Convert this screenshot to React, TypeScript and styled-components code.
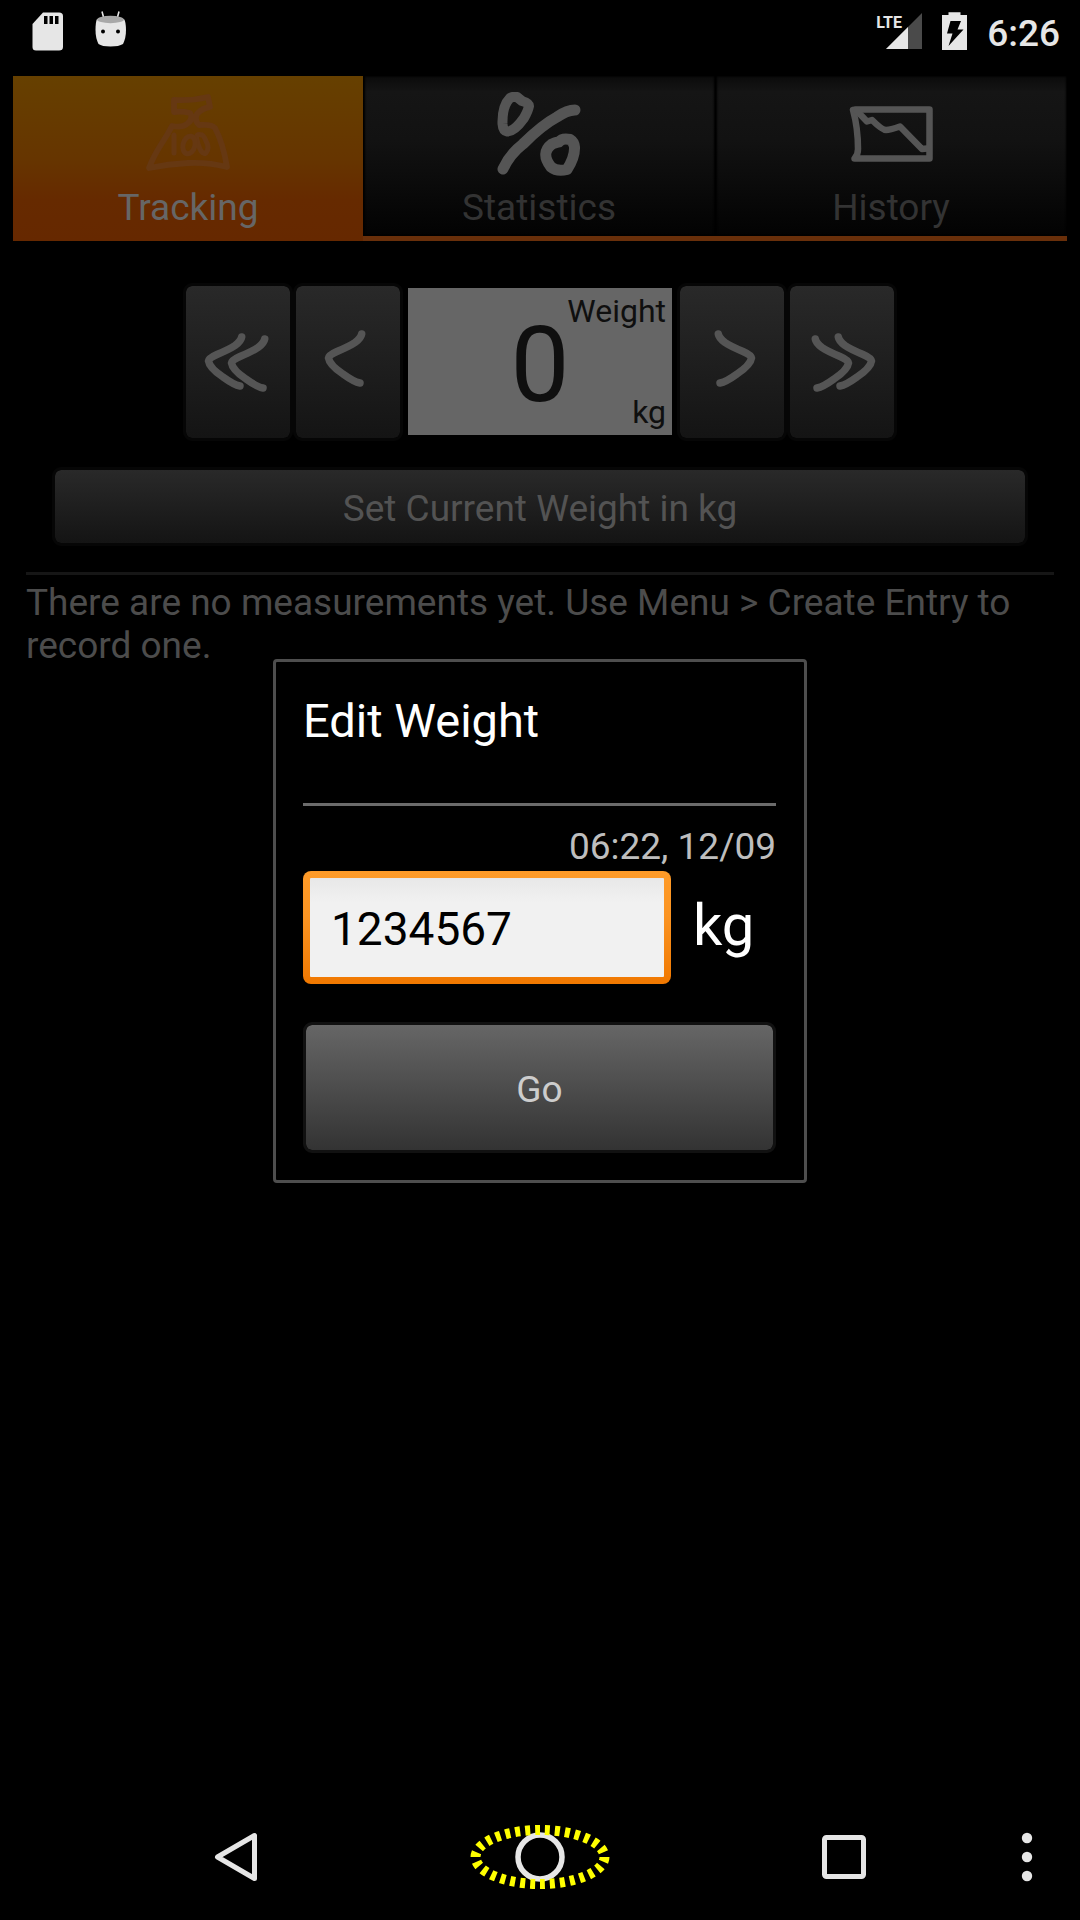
import React, { useState } from "react";
import styled, { createGlobalStyle } from "styled-components";

const GlobalStyle = createGlobalStyle`
  *, *::before, *::after { box-sizing: border-box; }
  body { margin: 0; background: #000; }
  button, input { font-family: inherit; }
  h1, p { margin: 0; font-weight: 400; }
  svg { display: block; }
`;

const Screen = styled.div`
  position: relative;
  display: flex;
  flex-direction: column;
  min-height: 100vh;
  background: #000;
  color: #4c4c4c;
  font-family: Roboto, "Noto Sans", sans-serif;
  font-size: 37px;
  line-height: 43px;
`;

const StatusBar = styled.header`
  display: flex;
  align-items: flex-start;
  justify-content: space-between;
  height: 76px;
  padding: 10px 20px 0 32px;
  color: #e6e6e6;
`;

const StatusGroup = styled.div<{ $gap: number }>`
  display: flex;
  gap: ${(p) => p.$gap}px;
`;

const Clock = styled.time`
  padding-top: 2px;
  font-weight: 500;
`;

const Tabs = styled.nav`
  display: grid;
  grid-template-columns: 350fr 352fr 352fr;
  padding: 0 13px;
`;

const Tab = styled.button<{ $selected: boolean }>`
  display: flex;
  flex-direction: column;
  align-items: center;
  gap: 10px;
  height: 165px;
  padding: 16px 0 0;
  border: 0;
  border-bottom: ${(p) => (p.$selected ? "0" : "5px solid #692f0a")};
  background: ${(p) =>
    p.$selected
      ? "linear-gradient(#664000, #663500 50%, #662a00 75%, #662800)"
      : "linear-gradient(#0b0b0b, #151515 10%, #121212 40%, #020202)"};
  box-shadow: ${(p) => (p.$selected ? "none" : "inset 2px 0 2px #000, inset -1px 0 2px #000")};
  color: ${(p) => (p.$selected ? "#666" : "#333")};
  font-size: 37px;
  line-height: 43px;
`;

const Main = styled.main`
  display: flex;
  flex-direction: column;
  padding: 42px 26px 0;
`;

const Stepper = styled.div`
  display: flex;
  justify-content: center;
`;

const HoloButton = styled.button`
  display: flex;
  align-items: center;
  justify-content: center;
  padding: 3px 0 0;
  border: 3px solid #060606;
  border-radius: 9px;
  background: linear-gradient(#292929, #141414) padding-box;
  color: #535353;
  font-size: 37px;
  line-height: 43px;
`;

const StepButton = styled(HoloButton)`
  width: 110px;
  height: 158px;
  padding: 0;
`;

const SetButton = styled(HoloButton)`
  height: 79px;
  margin: 26px;
`;

const ValueBox = styled.div`
  display: grid;
  width: 264px;
  margin: 5px 5px 6px;
  padding: 4px 6px;
  background: #666;
  color: #0f0f0f;
  font-size: 32px;
  line-height: 38px;
`;

const ValueCaption = styled.span<{ $align: "start" | "end" }>`
  grid-area: 1 / 1;
  align-self: ${(p) => p.$align};
  justify-self: end;
`;

const Value = styled.output`
  grid-area: 1 / 1;
  place-self: center;
  padding-top: 8px;
  font-size: 105px;
  line-height: 105px;
`;

const Rule = styled.hr<{ $color: string }>`
  height: 3px;
  margin: 0;
  border: 0;
  background: ${(p) => p.$color};
`;

const EmptyText = styled.p`
  padding-top: 6px;
`;

const Overlay = styled.div`
  position: absolute;
  inset: 48px 0 126px;
  display: flex;
  align-items: center;
  justify-content: center;
`;

const Dialog = styled.section`
  width: 534px;
  max-width: 100%;
  padding: 31px 28px 27px 27px;
  border: 3px solid #4e4e4e;
  border-radius: 4px;
  background: #000;
`;

const DialogTitle = styled.h1`
  margin-bottom: 54px;
  color: #fff;
  font-size: 47px;
  line-height: 56px;
`;

const Stamp = styled.p`
  padding: 19px 0 3px;
  color: #bebebe;
  text-align: right;
`;

const Field = styled.div`
  display: flex;
  align-items: baseline;
  gap: 22px;
  margin-bottom: 38px;
`;

const WeightInput = styled.input`
  flex: 1;
  min-width: 0;
  height: 113px;
  padding: 2px 21px 0;
  border: 7px solid transparent;
  border-radius: 8px;
  outline: 0;
  background:
    linear-gradient(#e8e8e8, #f1f1f1 25%) padding-box,
    linear-gradient(#ff9b28, #fb9422 40%, #f07800) border-box;
  color: #000;
  font-size: 46px;
`;

const Unit = styled.label`
  width: 83px;
  color: #fff;
  font-size: 58px;
  line-height: 68px;
`;

const GoButton = styled(HoloButton)`
  width: 100%;
  height: 131px;
  border-color: #111;
  background: linear-gradient(#666, #333) padding-box;
  color: #cdcdcd;
`;

const NavBar = styled.footer`
  display: grid;
  grid-template-columns: 84px 1fr 1fr 1fr 84px;
  height: 126px;
  margin-top: auto;
`;

const NavButton = styled.button`
  display: flex;
  align-items: center;
  justify-content: center;
  padding: 0;
  border: 0;
  background: none;
  color: #e6e6e6;

  &:first-child {
    grid-column: 2;
  }

  &:last-child {
    padding-right: 22px;
  }
`;

const SdCardIcon = () => (
  <svg width="31" height="42" viewBox="0 0 31 42" aria-hidden="true">
    <path d="M11 2.500H27Q31 2.500 31 6V37Q31 40.500 27 40.500H4Q.500 40.500 .500 37V14Z" fill="#e6e6e6" />
    <path d="M12 6h3.500v8H12zM17.500 6H21v8h-3.500zM23 6h3.500v8H23z" fill="#000" />
  </svg>
);

const RobotIcon = () => (
  <svg width="32" height="42" viewBox="0 0 32 42" aria-hidden="true">
    <path d="M7 1.500L9 9M24 1.500L22 9" stroke="#e6e6e6" strokeWidth="1.600" />
    <path d="M2 9H29Q31 12 31 20T28 34Q24 36.500 15.500 36.500T3.500 34Q.500 28 .500 20T2 9Z" fill="#e6e6e6" />
    <ellipse cx="15.500" cy="9.500" rx="13.500" ry="3.700" fill="#a8a8a8" />
    <circle cx="8" cy="21.500" r="2" fill="#000" />
    <circle cx="23" cy="21.500" r="2" fill="#000" />
  </svg>
);

const SignalIcon = () => (
  <svg width="46" height="42" viewBox="0 0 46 42" role="img" aria-label="LTE signal">
    <path d="M10 39L46 39V3Z" fill="#4a4a4a" />
    <path d="M10 39H32V17Z" fill="#e6e6e6" />
    <text x="26" y="18" textAnchor="end" fontSize="16" fontWeight="700" fill="#e6e6e6">
      LTE
    </text>
  </svg>
);

const BatteryIcon = () => (
  <svg width="25" height="42" viewBox="0 0 25 42" aria-hidden="true">
    <path d="M6.500 2.300H18.500V5H25V40H0V5H6.500Z" fill="#e6e6e6" />
    <path d="M8.500 11H19L15.500 19.500H21.500L6.500 36L10.500 23.500H5Z" fill="#000" />
  </svg>
);

const ScaleIcon = () => (
  <svg width="84" height="84" viewBox="0 0 84 84" fill="none" stroke="#663812" strokeWidth="5.800" strokeLinecap="round" strokeLinejoin="round" aria-hidden="true">
    <path d="M28 8Q46 9 62 5L64 15Q56 16 51 22Q48 28 53 33Q66 32 69 36Q77 51 81 75Q62 70 42 71Q22 72 3 76Q7 65 16 51Q22 42 26 34Q36 36 41 32Q48 27 44 21Q36 19 28 20Z" />
    <path d="M28 43V61M56 43Q49 41 51 48Q55 64 60 61Q64 56 60 49Q58 44 56 43Z" strokeWidth="5" />
    <ellipse cx="43" cy="53" rx="6" ry="9" strokeWidth="5" transform="rotate(14 43 53)" />
  </svg>
);

const PercentIcon = () => (
  <svg width="84" height="84" viewBox="0 0 84 84" fill="none" stroke="#555" strokeWidth="11" strokeLinecap="round" strokeLinejoin="round" aria-hidden="true">
    <path d="M6 77Q13 62 26 52Q45 33 60 25Q70 18 78 18" />
    <path d="M13 6Q17 4 20 5L25 9Q32 11 32 14Q31 19 27 26Q17 40 10 39.500Q6 39 5.500 32Q5 14 13 6Z" strokeWidth="10" />
    <path d="M55 52Q60 50 62 50Q65 46 73 47.500Q77 50 77.500 55Q78 65 70 77.500Q60 80 54 75Q43 61 55 52Z" />
  </svg>
);

const ChartIcon = () => (
  <svg width="84" height="84" viewBox="0 0 84 84" fill="none" stroke="#555" strokeWidth="6.500" strokeLinejoin="round" strokeLinecap="round" aria-hidden="true">
    <path d="M4 18Q5 18 7 17.500H80.500V66.500H5.500Q9 63 9 57Q9 36 4 18Z" />
    <path d="M8 19L18 29.500L23 28Q33 38 37 38Q41 38 51 34.500L73 57L78 56.500" />
  </svg>
);

const CHEVRON = "M55.700 14Q55 18 49 22.500Q44 26 31 31.500Q23 35 22.500 38Q23.500 45 37 54Q48 62 54 63";

const StepIcon = ({ double, flip }: { double?: boolean; flip?: boolean }) => (
  <svg width="84" height="84" viewBox="0 0 84 84" fill="none" stroke="#555" strokeWidth="7.500" strokeLinecap="round" aria-hidden="true">
    <g transform={flip ? "translate(84 0) scale(-1 1)" : undefined}>
      {double ? (
        <>
          <path d={CHEVRON} transform="translate(-10 3)" />
          <path d={CHEVRON} transform="translate(13 5)" />
        </>
      ) : (
        <path d={CHEVRON} />
      )}
    </g>
  </svg>
);

const BackIcon = () => (
  <svg width="44" height="52" viewBox="0 0 44 52" fill="none" stroke="currentColor" strokeWidth="5" strokeLinejoin="round" aria-hidden="true">
    <path d="M3.500 26L40.500 4.500V47.500Z" />
  </svg>
);

const HomeIcon = () => (
  <svg width="144" height="68" viewBox="0 0 144 68" fill="none" aria-hidden="true">
    <circle cx="72" cy="34" r="22" stroke="currentColor" strokeWidth="5.500" />
    <ellipse cx="72" cy="34" rx="64.500" ry="27" stroke="#ff0" strokeWidth="10" strokeDasharray="5 5" pathLength="300" />
  </svg>
);

const RecentIcon = () => (
  <svg width="44" height="44" viewBox="0 0 44 44" fill="none" aria-hidden="true">
    <rect x="2.500" y="2.500" width="39" height="39" rx="2" stroke="currentColor" strokeWidth="5" />
  </svg>
);

const MoreIcon = () => (
  <svg width="12" height="50" viewBox="0 0 12 50" fill="currentColor" aria-hidden="true">
    <circle cx="6" cy="6" r="5.200" />
    <circle cx="6" cy="25" r="5.200" />
    <circle cx="6" cy="44" r="5.200" />
  </svg>
);

const TABS = [
  { label: "Tracking", Icon: ScaleIcon },
  { label: "Statistics", Icon: PercentIcon },
  { label: "History", Icon: ChartIcon },
];

export default function App() {
  const [tab, setTab] = useState("Tracking");
  const [weight, setWeight] = useState("1234567");

  return (
    <Screen>
      <GlobalStyle />
      <StatusBar>
        <StatusGroup $gap={32}>
          <SdCardIcon />
          <RobotIcon />
        </StatusGroup>
        <StatusGroup $gap={20}>
          <SignalIcon />
          <BatteryIcon />
          <Clock>6:26</Clock>
        </StatusGroup>
      </StatusBar>

      <Tabs>
        {TABS.map(({ label, Icon }) => (
          <Tab key={label} type="button" $selected={tab === label} onClick={() => setTab(label)}>
            <Icon />
            {label}
          </Tab>
        ))}
      </Tabs>

      <Main>
        <Stepper>
          <StepButton type="button" aria-label="Decrease a lot">
            <StepIcon double />
          </StepButton>
          <StepButton type="button" aria-label="Decrease">
            <StepIcon />
          </StepButton>
          <ValueBox>
            <ValueCaption $align="start">Weight</ValueCaption>
            <Value>0</Value>
            <ValueCaption $align="end">kg</ValueCaption>
          </ValueBox>
          <StepButton type="button" aria-label="Increase">
            <StepIcon flip />
          </StepButton>
          <StepButton type="button" aria-label="Increase a lot">
            <StepIcon double flip />
          </StepButton>
        </Stepper>
        <SetButton type="button">Set Current Weight in kg</SetButton>
        <Rule $color="#161616" />
        <EmptyText>There are no measurements yet. Use Menu &gt; Create Entry to record one.</EmptyText>
      </Main>

      <NavBar>
        <NavButton type="button" aria-label="Back">
          <BackIcon />
        </NavButton>
        <NavButton type="button" aria-label="Home">
          <HomeIcon />
        </NavButton>
        <NavButton type="button" aria-label="Recent apps">
          <RecentIcon />
        </NavButton>
        <NavButton type="button" aria-label="Menu">
          <MoreIcon />
        </NavButton>
      </NavBar>

      <Overlay>
        <Dialog role="dialog" aria-labelledby="dialog-title">
          <DialogTitle id="dialog-title">Edit Weight</DialogTitle>
          <Rule $color="#6b6b6b" />
          <Stamp>06:22, 12/09</Stamp>
          <Field>
            <WeightInput
              id="weight"
              inputMode="decimal"
              value={weight}
              onChange={(e) => setWeight(e.target.value)}
            />
            <Unit htmlFor="weight">kg</Unit>
          </Field>
          <GoButton type="button">Go</GoButton>
        </Dialog>
      </Overlay>
    </Screen>
  );
}
